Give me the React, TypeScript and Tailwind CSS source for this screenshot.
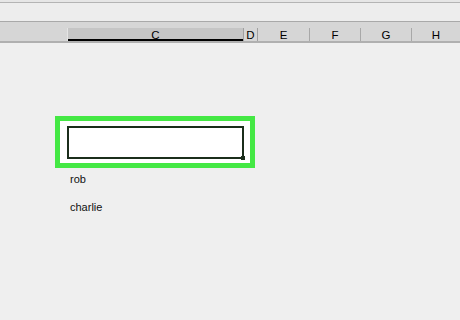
import React from "react";

export default function App() {
  const font = { fontFamily: '"Liberation Sans", Arial, sans-serif' };
  return (
    <div className="w-[460px] h-[320px] bg-[#efefef] overflow-hidden flex flex-col" style={font}>
      <div className="h-[2px] bg-[#e6e6e6]" />
      <div className="h-[1px] bg-[#b4b4b4]" />
      <div className="h-[18px] bg-[#ededed]" />
      <div className="h-[1px] bg-[#a9a9a9]" />
      <div className="h-[6px] bg-[#d6d6d6]" />
      <div className="h-[13px] bg-[#d6d6d6] flex text-[11.5px] leading-[14px] text-black">
        <div className="w-[68px] border-r border-[#e4e4e4]" />
        <div className="w-[175px] bg-[#c5c5c5] border-b-2 border-black flex justify-center">C</div>
        <div className="w-[15px] flex justify-center border-l border-r border-[#a0a0a0]">D</div>
        <div className="w-[52px] flex justify-center border-r border-[#a8a8a8]">E</div>
        <div className="w-[51px] flex justify-center border-r border-[#a8a8a8]">F</div>
        <div className="w-[51px] flex justify-center border-r border-[#a8a8a8]">G</div>
        <div className="flex-1 flex justify-center">H</div>
      </div>
      <div className="h-[2px] bg-[#b0b0b0]" />
      <div className="pl-[55px] pt-[73px]">
        <div className="w-[200px] h-[52px] border-[5px] border-[#44e844] bg-white flex items-center justify-center">
          <div className="relative w-[177px] h-[33px] border-[2px] border-[#1b2e1b] bg-white">
            <div className="absolute -right-[3px] -bottom-[3px] w-[4px] h-[4px] bg-[#1b2e1b]" />
          </div>
        </div>
        <div className="pl-[15px] pt-[4px] text-[11px] leading-[14px] text-[#111]">rob</div>
        <div className="pl-[15px] pt-[14px] text-[11px] leading-[14px] text-[#111]">charlie</div>
      </div>
    </div>
  );
}
